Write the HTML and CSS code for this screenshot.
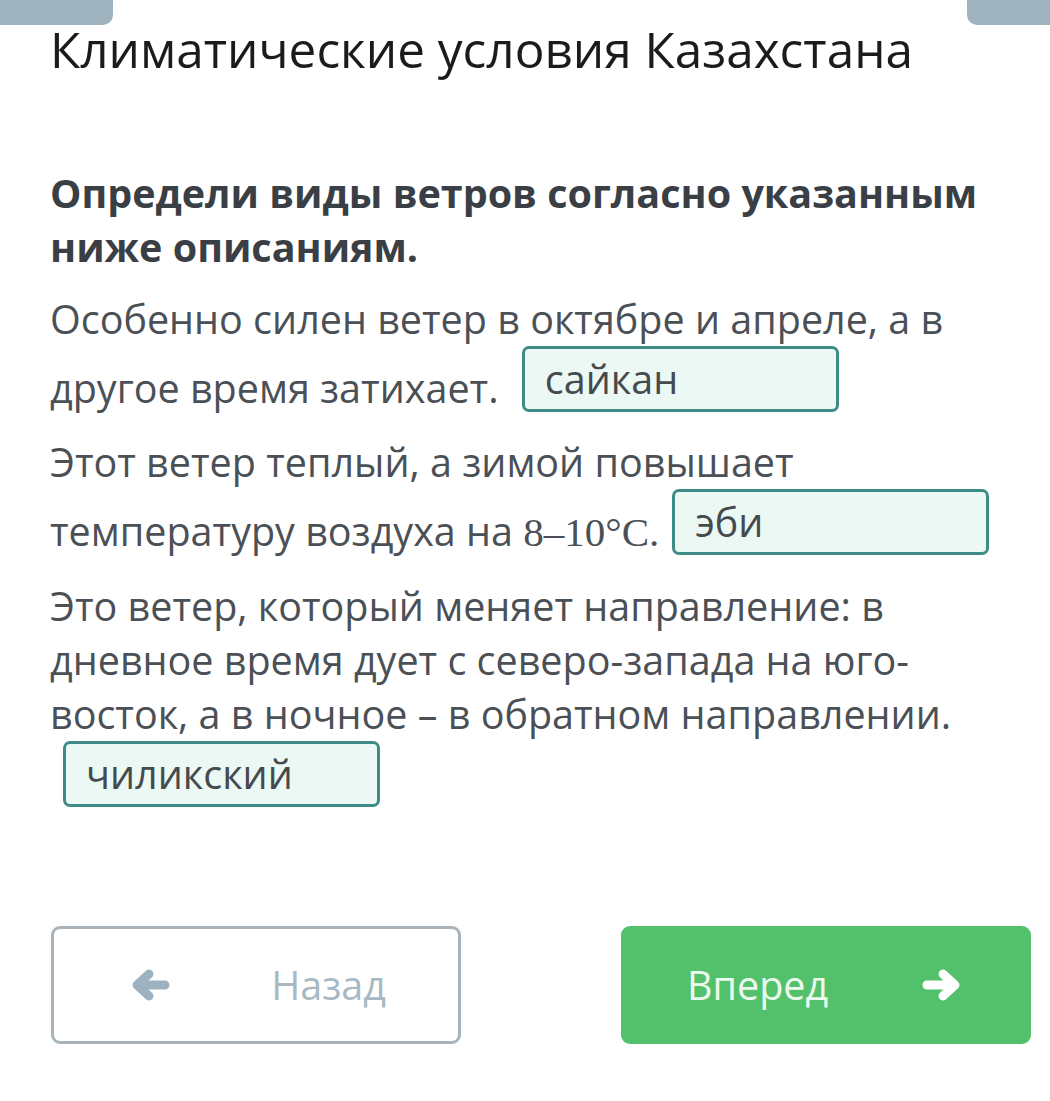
FILE: index.html
```html
<!DOCTYPE html>
<html lang="ru">
<head>
<meta charset="utf-8">
<title>Климатические условия Казахстана</title>
<link rel="stylesheet" href="styles.css">
</head>
<body>
<div class="tabs">
  <div class="tab tab-left"></div>
  <div class="tab tab-right"></div>
</div>
<main class="content">
  <h1 class="title">Климатические условия Казахстана</h1>
  <p class="question">Определи виды ветров согласно указанным ниже описаниям.</p>
  <p class="item">Особенно силен ветер в октябре и апреле, а в другое время затихает. <span class="answer">сайкан</span></p>
  <p class="item">Этот ветер теплый, а зимой повышает температуру воздуха на <span class="serif">8–10°C.</span><span class="answer">эби</span></p>
  <p class="item">Это ветер, который меняет направление: в дневное время дует с северо-запада на юго-восток, а в ночное – в обратном направлении. <span class="answer">чиликский</span></p>
</main>
<nav class="nav">
  <button class="btn btn-back">
    <svg class="arrow" width="40" height="34" viewBox="0 0 40 34"><path d="M35 17 H9 M19 6 L7 17 L19 28" fill="none" stroke="currentColor" stroke-width="9" stroke-linecap="round" stroke-linejoin="round"/></svg>
    <span>Назад</span>
  </button>
  <button class="btn btn-next">
    <span>Вперед</span>
    <svg class="arrow" width="42" height="34" viewBox="0 0 42 34"><path d="M6 17 H32 M22 6 L34 17 L22 28" fill="none" stroke="currentColor" stroke-width="9" stroke-linecap="round" stroke-linejoin="round"/></svg>
  </button>
</nav>
</body>
</html>
```
FILE: styles.css
```css
html, body {
  margin: 0;
  padding: 0;
  background: #ffffff;
}
body {
  width: 1050px;
  font-family: "Open Sans", "Noto Sans", sans-serif;
}
.tabs {
  display: flex;
  justify-content: space-between;
  height: 25px;
}
.tab {
  background: #9fb3bf;
  height: 25px;
}
.tab-left {
  width: 113px;
  border-bottom-right-radius: 10px;
}
.tab-right {
  width: 83px;
  border-bottom-left-radius: 10px;
}
.content {
  padding: 0 45px 0 50px;
}
.title {
  margin: 0;
  font-size: 49.5px;
  font-weight: 400;
  line-height: 48px;
  color: #1b1b1b;
}
.question {
  margin: 93px 0 0;
  font-size: 39.5px;
  font-weight: 700;
  line-height: 54px;
  color: #3a3e45;
}
.item {
  margin: 18px 0 0;
  font-size: 39.5px;
  line-height: 54px;
  color: #4b5056;
}
.item + .item {
  margin-top: 20px;
}
.serif {
  font-family: "Liberation Serif", "Times New Roman", serif;
  font-size: 41px;
}
.answer {
  display: inline-block;
  box-sizing: border-box;
  width: 317px;
  height: 66px;
  margin-left: 13px;
  padding: 0 20px;
  border: 3px solid #3f8c86;
  border-radius: 7px;
  background: #ebf8f3;
  color: #454a4f;
  font-size: 39.5px;
  line-height: 60px;
  vertical-align: 9px;
}
.nav {
  display: flex;
  justify-content: space-between;
  padding: 116px 19px 0 51px;
}
.btn {
  box-sizing: border-box;
  width: 410px;
  height: 118px;
  display: flex;
  align-items: center;
  justify-content: space-between;
  border-radius: 9px;
  font-family: "Open Sans", "Noto Sans", sans-serif;
  font-size: 39.5px;
  cursor: pointer;
}
.btn-back {
  padding: 0 72px 0 76px;
  background: #ffffff;
  border: 3px solid #a9b4ba;
  color: #a8b9c3;
}
.btn-back .arrow {
  color: #9db2c0;
}
.btn-next {
  padding: 0 68px 0 66px;
  background: #53c16b;
  border: none;
  color: #ecf9ee;
}
.btn-next .arrow {
  color: #ffffff;
}
```
